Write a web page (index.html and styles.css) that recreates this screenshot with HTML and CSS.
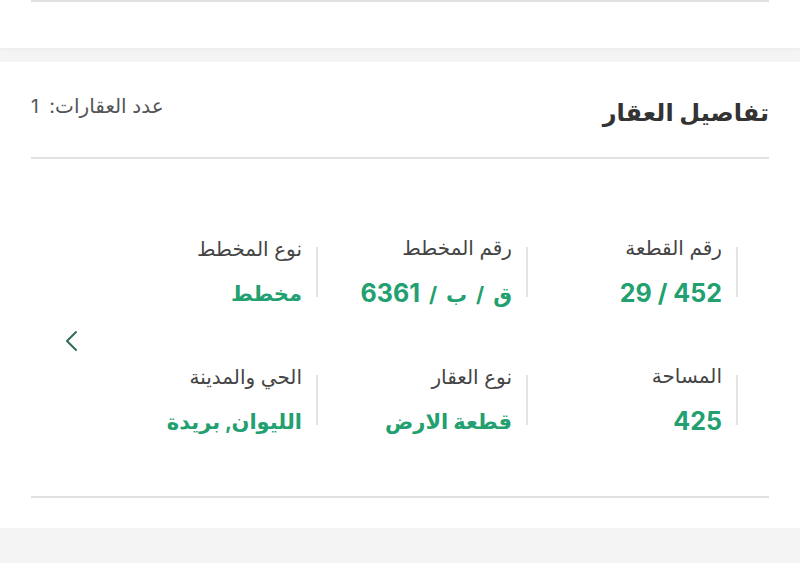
FILE: index.html
```html
<!DOCTYPE html>
<html dir="rtl" lang="ar">
<head>
  <meta charset="UTF-8" />
  <title>تفاصيل العقار</title>
  <link rel="stylesheet" href="styles.css">
</head>
<body>

  <div class="top-section">
    <div class="line"></div>
  </div>

  <div class="card">
    <div class="card-header">
      <h2>تفاصيل العقار</h2>
      <span class="count">عدد العقارات: <span class="num">1</span></span>
    </div>

    <div class="details">
      <div class="grid">
        <div class="item">
          <span class="bar"></span>
          <div class="info">
            <div class="label">رقم القطعة</div>
            <div class="value"><span class="num">452 / 29</span></div>
          </div>
        </div>
        <div class="item">
          <span class="bar"></span>
          <div class="info">
            <div class="label">رقم المخطط</div>
            <div class="value code">ق / ب / <span class="num">6361</span></div>
          </div>
        </div>
        <div class="item">
          <span class="bar"></span>
          <div class="info">
            <div class="label">نوع المخطط</div>
            <div class="value">مخطط</div>
          </div>
        </div>
        <div class="item">
          <span class="bar"></span>
          <div class="info">
            <div class="label">المساحة</div>
            <div class="value"><span class="num">425</span></div>
          </div>
        </div>
        <div class="item">
          <span class="bar"></span>
          <div class="info">
            <div class="label">نوع العقار</div>
            <div class="value">قطعة الارض</div>
          </div>
        </div>
        <div class="item">
          <span class="bar"></span>
          <div class="info">
            <div class="label">الحي والمدينة</div>
            <div class="value">الليوان, بريدة</div>
          </div>
        </div>
      </div>

      <button class="next">
        <svg width="14" height="22" viewBox="0 0 14 22">
          <polyline points="12,2 3,11 12,20" fill="none" stroke="#2f6d5d" stroke-width="2" stroke-linecap="round" stroke-linejoin="round" />
        </svg>
      </button>
    </div>

    <div class="line"></div>
  </div>

  <div class="bottom-band"></div>

</body>
</html>
```

FILE: styles.css
```css
body {
  font-family: "Inter", "DejaVu Sans", sans-serif;
  background-color: #f4f4f5;
  margin: 0;
  padding: 0;
}
.line {
  height: 2px;
  background-color: #e2e2e4;
}
.top-section {
  background-color: #fff;
  height: 48px;
  padding: 0 31px;
  box-shadow: 0 2px 3px rgba(0,0,0,0.03);
}
.card {
  background-color: #fff;
  margin-top: 14px;
  padding: 0 31px 30px;
}
.card-header {
  display: flex;
  justify-content: space-between;
  align-items: flex-start;
  height: 97px;
  border-bottom: 2px solid #e2e2e4;
  box-sizing: border-box;
}
.card-header h2 {
  margin: 36px 0 0;
  font-size: 24px;
  font-weight: bold;
  color: #333;
}
.count {
  margin-top: 32px;
  font-size: 20px;
  color: #555;
}
.count .num {
  font-size: 19px;
  margin-right: 5px;
}
.details {
  display: flex;
  align-items: center;
  padding: 74px 31px 58px 0;
}
.grid {
  display: grid;
  grid-template-columns: repeat(3, 210px);
  row-gap: 51px;
}
.item {
  display: flex;
  align-items: center;
  gap: 14px;
}
.bar {
  width: 2px;
  height: 50px;
  background-color: #e4e4e6;
}
.label {
  font-size: 20px;
  color: #444;
  line-height: 30px;
}
.value {
  margin-top: 15px;
  font-size: 21px;
  font-weight: bold;
  color: #22a070;
  line-height: 30px;
}
.value .num {
  font-size: 25px;
}
.value.code {
  word-spacing: 4px;
}
.next {
  margin-right: 30px;
  margin-top: 14px;
  background: none;
  border: none;
  padding: 0;
  cursor: pointer;
}
.bottom-band {
  height: 40px;
}
```
